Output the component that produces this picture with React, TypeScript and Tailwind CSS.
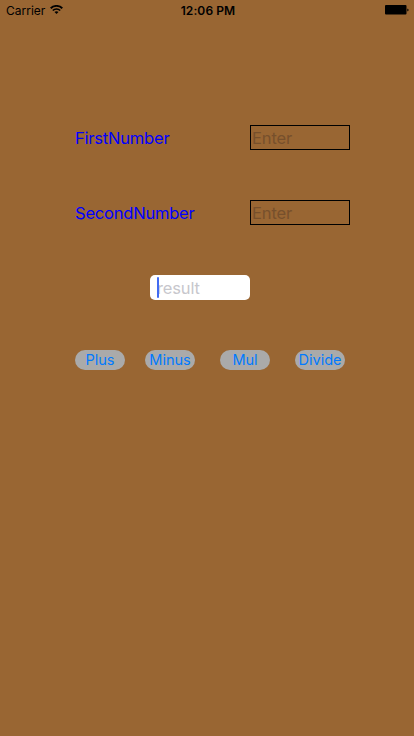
import React from "react";

function StatusBar() {
  return (
    <header className="grid h-5 grid-cols-3 items-center pl-1.5 pr-[5px] text-[12px] leading-[19px] text-black">
      <div className="flex items-center gap-[5px]">
        <span className="pt-px">Carrier</span>
        <svg className="mb-px" width="13" height="9" viewBox="0 0 13 9" fill="none" stroke="black">
          <path d="M0.7 3.3C4 0.1 9 0.1 12.3 3.3" strokeWidth="1.9" />
          <path d="M2.8 5.5C4.9 3.5 8.1 3.5 10.2 5.5" strokeWidth="1.7" />
          <path d="M6.5 9L4.5 7C5.6 6 7.4 6 8.5 7Z" fill="black" stroke="none" />
        </svg>
      </div>
      <span className="pl-px pt-px text-center font-semibold tracking-[0.1px]">12:06 PM</span>
      <svg className="justify-self-end" width="24" height="10" viewBox="0 0 24 10">
        <rect x="0" y="0" width="21.5" height="9.5" rx="1" />
        <path d="M22.3 3.7h.5q.7 0 .7 1.3t-.7 1.3h-.5z" />
      </svg>
    </header>
  );
}

function NumberRow({ label }: { label: string }) {
  return (
    <label className="flex h-[25px] items-center justify-between">
      <span className="pt-px text-[16.5px] leading-6 tracking-[-0.2px] text-[#0000ff]">{label}</span>
      <input
        placeholder="Enter"
        className="h-[25px] w-[100px] border border-black bg-transparent px-px pt-px text-[16.5px] leading-[22px] tracking-[-0.1px] outline-none placeholder:text-[#77502c]"
      />
    </label>
  );
}

function Operation({ name }: { name: string }) {
  return (
    <button className="flex h-5 w-[50px] items-center justify-center rounded-full bg-[#aaaaaa] text-[14.5px] leading-5 text-[#007aff]">
      {name}
    </button>
  );
}

export default function App() {
  return (
    <div className="h-[736px] w-[414px] bg-[#996633] font-['Inter','Liberation_Sans',sans-serif]">
      <StatusBar />
      <main className="flex flex-col pl-[75px] pr-16 pt-[105px]">
        <div className="flex flex-col gap-[50px]">
          <NumberRow label="FirstNumber" />
          <NumberRow label="SecondNumber" />
        </div>
        <div className="ml-[75px] mt-[50px] flex h-[25px] w-[100px] items-center rounded-[5px] bg-white pl-[7px]">
          <span className="relative z-10 h-[21px] w-0.5 rounded-full bg-[#426bf2]" />
          <span className="-ml-0.5 pt-px text-[16.5px] leading-6 tracking-[-0.15px] text-[#c7c7cd]">result</span>
        </div>
        <div className="mt-[50px] flex">
          <Operation name="Plus" />
          <div className="ml-5 flex gap-[25px]">
            <Operation name="Minus" />
            <Operation name="Mul" />
            <Operation name="Divide" />
          </div>
        </div>
      </main>
    </div>
  );
}
